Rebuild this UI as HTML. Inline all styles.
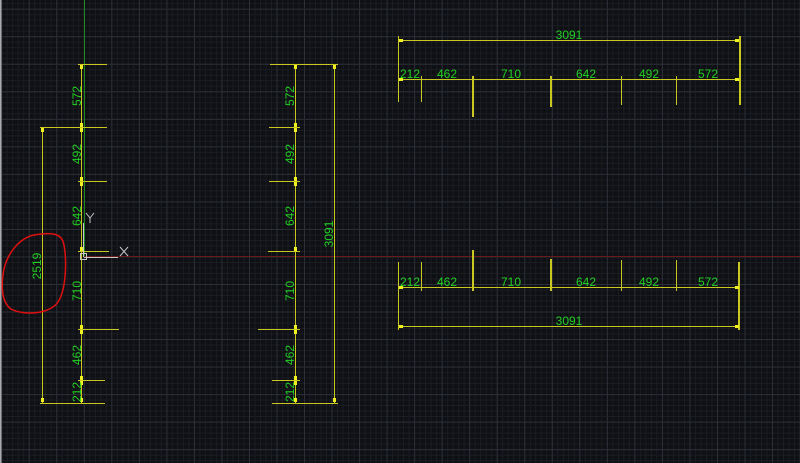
<!DOCTYPE html>
<html><head><meta charset="utf-8"><style>
html,body{margin:0;padding:0;background:#0e1014;overflow:hidden}
svg{display:block}
text{font-family:"Liberation Sans",sans-serif;font-size:12px;fill:#22d022}
.y rect{fill:#c8c820}
</style></head><body>
<svg width="800" height="463" viewBox="0 0 800 463" xmlns="http://www.w3.org/2000/svg" shape-rendering="crispEdges">
<defs>
<pattern id="minor" x="1.2" y="8.7" width="5.506" height="5.506" patternUnits="userSpaceOnUse">
<path d="M0 0.5H5.506M0.5 0V5.506" stroke="#1b1d23" stroke-width="1" fill="none"/>
</pattern>
<pattern id="major" x="1.2" y="8.7" width="27.53" height="27.53" patternUnits="userSpaceOnUse">
<path d="M0 0.5H27.53M0.5 0V27.53" stroke="#2c2e38" stroke-width="1" fill="none"/>
</pattern>
</defs>
<rect width="800" height="463" fill="#0e1014"/>
<rect width="800" height="463" fill="url(#minor)"/>
<rect width="800" height="463" fill="url(#major)"/>
<rect x="0" y="0" width="1.5" height="463" fill="#aaa"/>
<rect x="84" y="0" width="1" height="256" fill="#1f8a1f"/>
<rect x="84" y="256" width="716" height="1" fill="#6a1a1a"/>
<g class="y">
<rect x="81" y="64" width="1" height="340"/>
<rect x="78" y="64" width="29" height="1"/>
<rect x="40" y="127" width="67" height="1"/>
<rect x="78" y="181" width="29" height="1"/>
<rect x="78" y="251" width="31" height="1"/>
<rect x="78" y="329" width="41" height="1"/>
<rect x="78" y="380" width="27" height="1"/>
<rect x="40" y="403" width="65" height="1"/>
<rect x="42" y="127" width="1" height="276"/>
<rect x="295" y="64" width="1" height="340"/>
<rect x="270" y="64" width="68" height="1"/>
<rect x="269" y="127" width="31" height="1"/>
<rect x="269" y="181" width="31" height="1"/>
<rect x="268" y="251" width="32" height="1"/>
<rect x="258" y="329" width="42" height="1"/>
<rect x="272" y="380" width="28" height="1"/>
<rect x="272" y="403" width="66" height="1"/>
<rect x="334" y="64" width="1" height="340"/>
<rect x="398" y="40" width="342" height="1"/>
<rect x="398" y="79" width="342" height="1"/>
<rect x="398" y="36" width="1" height="66"/>
<rect x="421" y="76" width="1" height="26"/>
<rect x="472" y="76" width="2" height="41"/>
<rect x="550" y="76" width="2" height="31"/>
<rect x="621" y="76" width="1" height="29"/>
<rect x="676" y="76" width="1" height="29"/>
<rect x="739" y="36" width="2" height="69"/>
<rect x="398" y="287" width="342" height="1"/>
<rect x="398" y="326" width="342" height="1"/>
<rect x="398" y="262" width="1" height="68"/>
<rect x="421" y="262" width="1" height="29"/>
<rect x="472" y="250" width="2" height="41"/>
<rect x="550" y="259" width="2" height="32"/>
<rect x="621" y="260" width="1" height="31"/>
<rect x="676" y="260" width="1" height="31"/>
<rect x="738" y="262" width="2" height="68"/>
</g>
<g fill="#f0f020">
<rect x="80" y="65" width="3" height="4"/><rect x="80" y="123" width="3" height="4"/><rect x="80" y="128" width="3" height="4"/>
<rect x="80" y="177" width="3" height="4"/><rect x="80" y="182" width="3" height="4"/><rect x="80" y="247" width="3" height="4"/>
<rect x="80" y="325" width="3" height="4"/><rect x="80" y="330" width="3" height="4"/><rect x="80" y="376" width="3" height="4"/>
<rect x="80" y="381" width="3" height="4"/><rect x="80" y="398" width="3" height="4"/>
<rect x="41" y="128" width="3" height="4"/><rect x="41" y="398" width="3" height="4"/>
<rect x="294" y="65" width="3" height="4"/><rect x="294" y="123" width="3" height="4"/><rect x="294" y="128" width="3" height="4"/>
<rect x="294" y="177" width="3" height="4"/><rect x="294" y="182" width="3" height="4"/><rect x="294" y="247" width="3" height="4"/>
<rect x="294" y="325" width="3" height="4"/><rect x="294" y="330" width="3" height="4"/><rect x="294" y="376" width="3" height="4"/>
<rect x="294" y="381" width="3" height="4"/><rect x="294" y="398" width="3" height="4"/>
<rect x="333" y="65" width="3" height="4"/><rect x="333" y="398" width="3" height="4"/>
<rect x="399" y="39" width="4" height="3"/><rect x="735" y="39" width="4" height="3"/>
<rect x="399" y="78" width="4" height="3"/><rect x="735" y="78" width="4" height="3"/>
<rect x="399" y="286" width="4" height="3"/><rect x="735" y="286" width="4" height="3"/>
<rect x="399" y="325" width="4" height="3"/><rect x="735" y="325" width="4" height="3"/>
</g>
<g>
<text transform="translate(81,96) rotate(-90)" text-anchor="middle">572</text>
<text transform="translate(81,154) rotate(-90)" text-anchor="middle">492</text>
<text transform="translate(81,216) rotate(-90)" text-anchor="middle">642</text>
<text transform="translate(81,291) rotate(-90)" text-anchor="middle">710</text>
<text transform="translate(81,355) rotate(-90)" text-anchor="middle">462</text>
<text transform="translate(81,392) rotate(-90)" text-anchor="middle">212</text>
<text transform="translate(41,266) rotate(-90)" text-anchor="middle">2519</text>
<text transform="translate(294,96) rotate(-90)" text-anchor="middle">572</text>
<text transform="translate(294,154) rotate(-90)" text-anchor="middle">492</text>
<text transform="translate(294,216) rotate(-90)" text-anchor="middle">642</text>
<text transform="translate(294,291) rotate(-90)" text-anchor="middle">710</text>
<text transform="translate(294,355) rotate(-90)" text-anchor="middle">462</text>
<text transform="translate(294,392) rotate(-90)" text-anchor="middle">212</text>
<text transform="translate(333,234) rotate(-90)" text-anchor="middle">3091</text>
<text x="569" y="39" text-anchor="middle">3091</text>
<text x="410" y="78" text-anchor="middle">212</text>
<text x="447" y="78" text-anchor="middle">462</text>
<text x="511" y="78" text-anchor="middle">710</text>
<text x="586" y="78" text-anchor="middle">642</text>
<text x="649" y="78" text-anchor="middle">492</text>
<text x="708" y="78" text-anchor="middle">572</text>
<text x="410" y="286" text-anchor="middle">212</text>
<text x="447" y="286" text-anchor="middle">462</text>
<text x="511" y="286" text-anchor="middle">710</text>
<text x="586" y="286" text-anchor="middle">642</text>
<text x="649" y="286" text-anchor="middle">492</text>
<text x="708" y="286" text-anchor="middle">572</text>
<text x="569" y="325" text-anchor="middle">3091</text>
</g>
<g stroke="#c8c8c8" fill="none" stroke-width="1" shape-rendering="auto">
<line x1="83.5" y1="223" x2="83.5" y2="257"/>
<line x1="84" y1="257.5" x2="118" y2="257.5"/>
<rect x="80.5" y="253.5" width="6" height="6"/>
<path d="M86 213 L90 218 L94 213 M90 218 V223"/>
<path d="M120 247 L128 256 M128 247 L120 256"/>
</g>
<path shape-rendering="auto" d="M34 235 C52 232 62 233 64 245 C67 262 66 290 58 302 C50 314 24 316 11 309 C1 302 1 284 4 269 C8 252 20 238 34 235 Z" stroke="#e01010" stroke-width="1.5" fill="none"/>
</svg>
</body></html>
